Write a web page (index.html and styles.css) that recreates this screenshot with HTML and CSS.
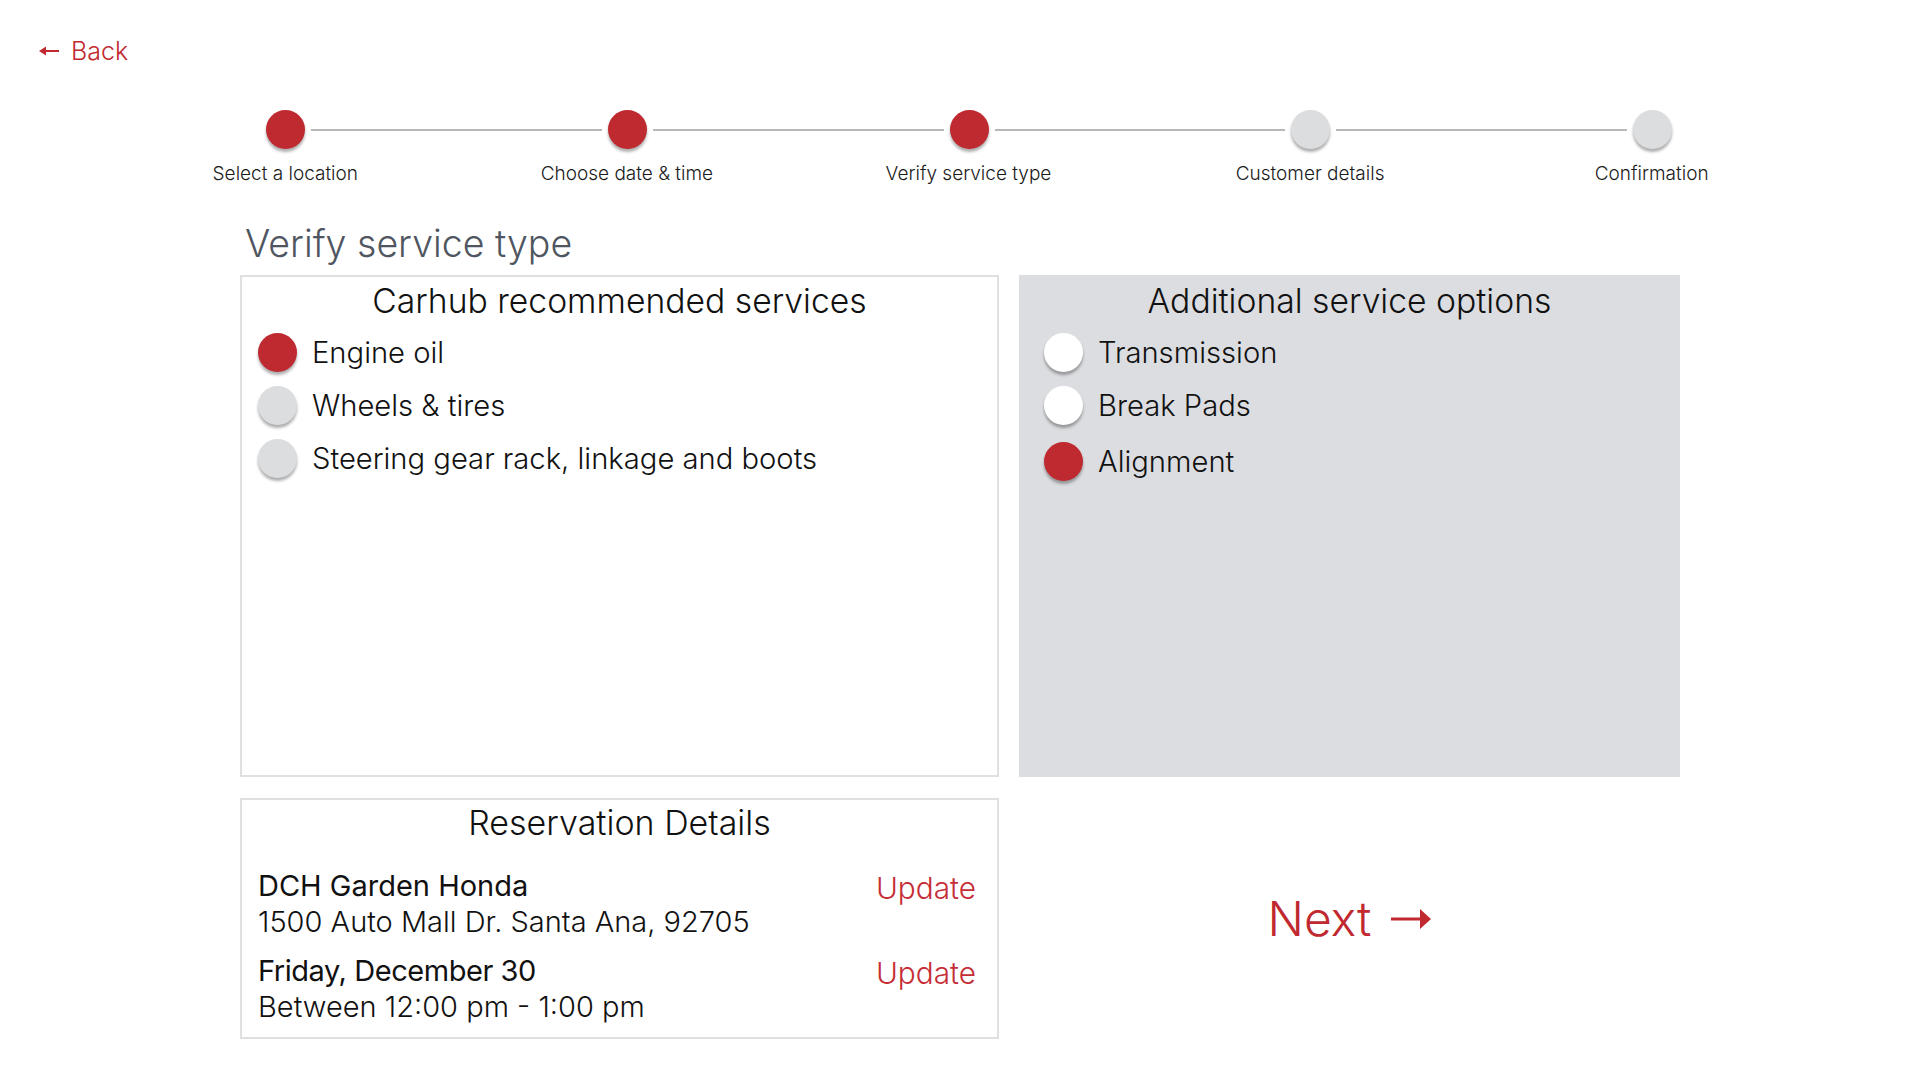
FILE: index.html
```html
<!DOCTYPE html>
<html lang="en">
<head>
<meta charset="utf-8">
<title>Verify service type</title>
<link rel="stylesheet" href="styles.css">
</head>
<body>
<div class="page">
  <header class="topbar">
    <a class="back" href="#">
      <svg class="back-arrow" width="20" height="12" viewBox="0 0 20 12"><line x1="5" y1="6" x2="20" y2="6" stroke="#c0292f" stroke-width="2"/><polygon points="0,6 7,1.5 7,10.5" fill="#c0292f"/></svg>
      <span>Back</span>
    </a>
  </header>

  <section class="stepper">
    <div class="track">
      <span class="dot dot-red"></span><span class="line"></span>
      <span class="dot dot-red"></span><span class="line"></span>
      <span class="dot dot-red"></span><span class="line"></span>
      <span class="dot dot-gray"></span><span class="line"></span>
      <span class="dot dot-gray"></span>
    </div>
    <div class="labels">
      <span>Select a location</span>
      <span>Choose date &amp; time</span>
      <span>Verify service type</span>
      <span>Customer details</span>
      <span>Confirmation</span>
    </div>
  </section>

  <h1 class="title">Verify service type</h1>

  <section class="panels">
    <div class="panel panel-left">
      <h2 class="panel-title">Carhub recommended services</h2>
      <ul class="options">
        <li><span class="dot dot-red"></span>Engine oil</li>
        <li><span class="dot dot-gray"></span>Wheels &amp; tires</li>
        <li><span class="dot dot-gray"></span>Steering gear rack, linkage and boots</li>
      </ul>
    </div>
    <div class="panel panel-right">
      <h2 class="panel-title">Additional service options</h2>
      <ul class="options options-right">
        <li><span class="dot dot-white"></span>Transmission</li>
        <li><span class="dot dot-white"></span>Break Pads</li>
        <li><span class="dot dot-red"></span>Alignment</li>
      </ul>
    </div>
  </section>

  <section class="bottom">
    <div class="reservation">
      <h2 class="res-title">Reservation Details</h2>
      <div class="res-group">
        <div class="res-text">
          <div class="res-strong">DCH Garden Honda</div>
          <div class="res-line">1500 Auto Mall Dr. Santa Ana, 92705</div>
        </div>
        <a class="update" href="#">Update</a>
      </div>
      <div class="res-group res-group-2">
        <div class="res-text">
          <div class="res-strong res-date">Friday, December 30</div>
          <div class="res-line">Between 12:00 pm - 1:00 pm</div>
        </div>
        <a class="update" href="#">Update</a>
      </div>
    </div>
    <div class="next-cell">
      <a class="next" href="#">
        <span>Next</span>
        <svg class="next-arrow" width="40" height="22" viewBox="0 0 40 22"><rect x="0" y="9.5" width="31" height="3" fill="#c0292f"/><polygon points="29,1 40,11 29,21" fill="#c0292f"/></svg>
      </a>
    </div>
  </section>
</div>
</body>
</html>
```

FILE: styles.css
```css
* { box-sizing: border-box; }

html, body {
  margin: 0;
  padding: 0;
  background: #ffffff;
}

body {
  font-family: Inter, "Liberation Sans", Arial, sans-serif;
  font-weight: 300;
  color: #111111;
}

.page {
  width: 1920px;
  height: 1080px;
  overflow: hidden;
}

a { text-decoration: none; }

/* Top bar */
.topbar {
  height: 100px;
  display: flex;
  align-items: center;
  padding: 2px 0 0 39px;
}

.back {
  display: flex;
  align-items: center;
  gap: 12px;
  color: #c0292f;
  font-size: 25px;
  line-height: 32px;
}

.back-arrow { display: block; }

/* Stepper */
.stepper {
  margin-top: 10px;
}

.track {
  display: flex;
  align-items: center;
  margin-left: 266px;
  width: 1406px;
}

.dot {
  width: 39px;
  height: 39px;
  border-radius: 50%;
  flex: none;
  box-shadow: 0 3px 3px rgba(0, 0, 0, 0.32);
}

.dot-red { background: #bf2a31; }
.dot-gray { background: #dcdddf; }
.dot-white { background: #ffffff; }

.line {
  flex: 1;
  height: 2px;
  margin: 0 6px;
  background: #b8b8b8;
}

.labels {
  display: grid;
  grid-template-columns: repeat(5, 341.6px);
  margin-left: 114.5px;
  margin-top: 13px;
  font-size: 19px;
  line-height: 24px;
  font-weight: 300;
  color: #1a1a1a;
}

.labels span { text-align: center; }

/* Title */
.title {
  margin: 36px 0 0 245px;
  font-size: 37.5px;
  line-height: 44px;
  font-weight: 300;
  color: #50565f;
}

/* Panels */
.panels {
  display: grid;
  grid-template-columns: 759px 661px;
  gap: 20px;
  margin: 9px 0 0 240px;
}

.panel {
  height: 502px;
}

.panel-left {
  border: 2px solid #e0e0e0;
  padding: 2px 16px 0 16px;
}

.panel-right {
  background: #dcdde0;
  padding: 4px 25px 0 25px;
}

.panel-title {
  margin: 0;
  text-align: center;
  font-size: 33.7px;
  line-height: 44px;
  font-weight: 300;
  color: #111111;
}

.options {
  list-style: none;
  margin: 3px 0 0 0;
  padding: 0;
}

.options li {
  display: flex;
  align-items: center;
  gap: 15px;
  height: 53px;
  font-size: 29.2px;
  color: #111111;
}

.options-right li:nth-child(3) { margin-top: 3px; }

/* Bottom row */
.bottom {
  display: grid;
  grid-template-columns: 759px 661px;
  gap: 20px;
  margin: 21px 0 0 240px;
}

.reservation {
  height: 241px;
  border: 2px solid #e0e0e0;
  padding: 3px 21px 0 16px;
}

.res-title {
  margin: 0 -5px 0 0;
  text-align: center;
  font-size: 34px;
  line-height: 40px;
  font-weight: 300;
  color: #111111;
}

.res-group {
  display: flex;
  justify-content: space-between;
  align-items: flex-start;
  margin-top: 25px;
}

.res-group-2 { margin-top: 13px; }

.res-strong {
  font-size: 29px;
  line-height: 36px;
  font-weight: 400;
  color: #111111;
}

.res-date { letter-spacing: -0.45px; }

.res-line {
  font-size: 29px;
  line-height: 36px;
  font-weight: 300;
  color: #111111;
}

.update {
  color: #c62d36;
  font-size: 29.8px;
  line-height: 36px;
  margin-top: 2px;
}

.next-cell {
  display: flex;
  align-items: center;
  justify-content: center;
}

.next {
  display: flex;
  align-items: center;
  gap: 20px;
  color: #c0292f;
  font-size: 48px;
  line-height: 56px;
  font-weight: 300;
}

.next-arrow { display: block; }
```
